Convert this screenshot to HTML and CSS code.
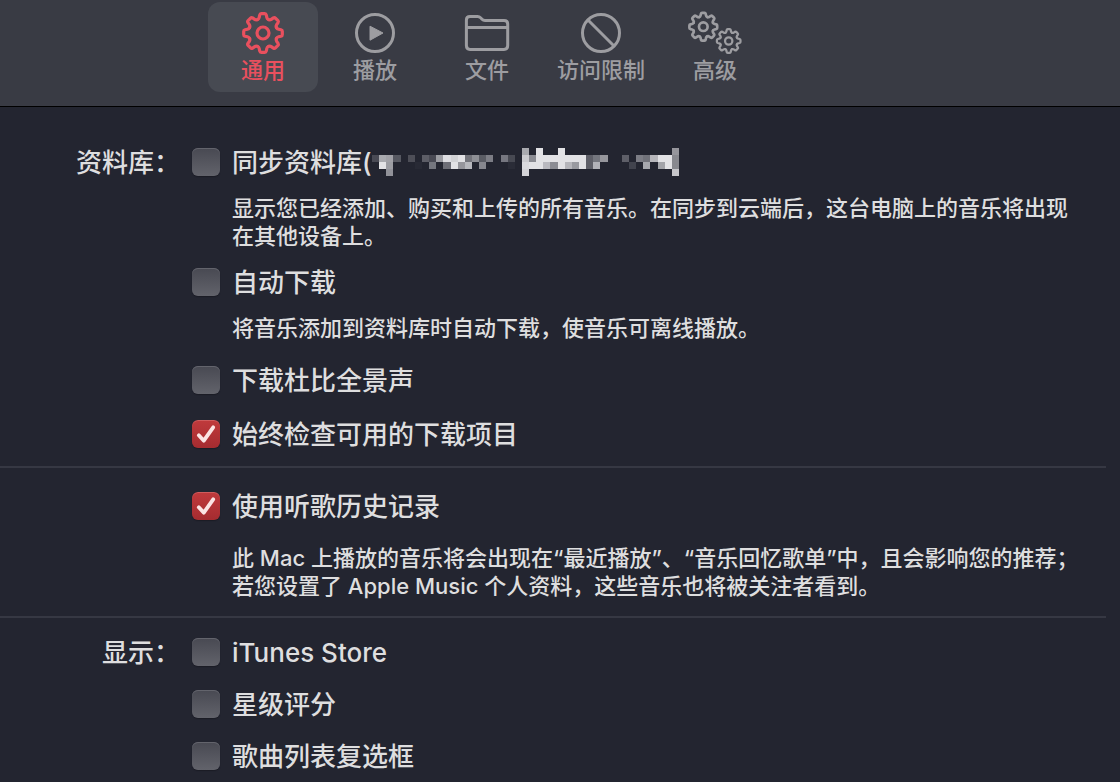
FILE: index.html
```html
<!DOCTYPE html>
<html lang="zh-CN">
<head>
    <meta charset="UTF-8">
    <meta name="viewport" content="width=device-width, initial-scale=1.0">
    <title>通用</title>
    <link rel="stylesheet" href="styles.css">
</head>
<body>
    <svg class="defs" width="0" height="0" aria-hidden="true">
        <defs>
            <path id="tooth" d="M-5.5-13.4Q-4.1-14-3.8-15.5L-3.3-18Q-3-19.3-1.8-19.3H1.8Q3-19.3 3.3-18L3.8-15.5Q4.1-14 5.5-13.4"/>
            <g id="gear" fill="none" stroke="currentColor" stroke-linecap="round">
                <use href="#tooth"/>
                <use href="#tooth" transform="rotate(45)"/>
                <use href="#tooth" transform="rotate(90)"/>
                <use href="#tooth" transform="rotate(135)"/>
                <use href="#tooth" transform="rotate(180)"/>
                <use href="#tooth" transform="rotate(225)"/>
                <use href="#tooth" transform="rotate(270)"/>
                <use href="#tooth" transform="rotate(315)"/>
                <circle r="6"/>
            </g>
        </defs>
    </svg>

    <nav class="toolbar">
        <button class="tab active" type="button">
            <svg width="44" height="44" viewBox="-22 -22 44 44" stroke-width="3.2"><use href="#gear"/></svg>
            <span>通用</span>
        </button>
        <button class="tab" type="button">
            <svg width="44" height="44" viewBox="0 0 44 44">
                <circle cx="22" cy="22" r="18.5" fill="none" stroke="currentColor" stroke-width="3"/>
                <path d="M17 15.2L30 22L17 29.2Z" fill="currentColor" stroke="currentColor" stroke-linejoin="round"/>
            </svg>
            <span>播放</span>
        </button>
        <button class="tab" type="button">
            <svg width="48" height="44" viewBox="0 0 48 44" fill="none" stroke="currentColor" stroke-width="3" stroke-linejoin="round">
                <path d="M3.4 9Q3.4 5.4 7 5.4H14.5Q16.3 5.4 17.6 6.8L19 8.2Q20.2 9.5 22 9.5H41Q44.7 9.5 44.7 13V34.5Q44.7 38.4 41 38.4H7Q3.4 38.4 3.4 34.5ZM3.4 16.6H44.7"/>
            </svg>
            <span>文件</span>
        </button>
        <button class="tab" type="button">
            <svg width="44" height="44" viewBox="0 0 44 44" fill="none" stroke="currentColor" stroke-width="3">
                <circle cx="22" cy="22" r="18.5"/>
                <path d="M9 9L35 35"/>
            </svg>
            <span>访问限制</span>
        </button>
        <button class="tab" type="button">
            <svg width="56" height="44" viewBox="0 0 56 44" stroke-width="3.7">
                <use href="#gear" transform="translate(16.3 15.7) scale(.72)"/>
                <use href="#gear" transform="translate(41.7 30) scale(.61)"/>
            </svg>
            <span>高级</span>
        </button>
    </nav>

    <main>
        <section class="group library">
            <h2>资料库：</h2>
            <div class="options">
                <div class="option">
                    <input type="checkbox" id="sync">
                    <label for="sync">同步资料库(<svg class="mosaic" width="307" height="28" viewBox="0 0 43 4" preserveAspectRatio="none" shape-rendering="crispEdges" aria-hidden="true"></svg></label>
                    <p>显示您已经添加、购买和上传的所有音乐。在同步到云端后，这台电脑上的音乐将出现<br>在其他设备上。</p>
                </div>
                <div class="option">
                    <input type="checkbox" id="auto">
                    <label for="auto">自动下载</label>
                    <p>将音乐添加到资料库时自动下载，使音乐可离线播放。</p>
                </div>
                <div class="option">
                    <input type="checkbox" id="dolby">
                    <label for="dolby">下载杜比全景声</label>
                </div>
                <div class="option">
                    <input type="checkbox" id="check" checked>
                    <label for="check">始终检查可用的下载项目</label>
                </div>
            </div>
        </section>

        <section class="group history">
            <div class="options">
                <div class="option">
                    <input type="checkbox" id="history" checked>
                    <label for="history">使用听歌历史记录</label>
                    <p>此 Mac 上播放的音乐将会出现在“最近播放”、“音乐回忆歌单”中，且会影响您的推荐；<br>若您设置了 Apple Music 个人资料，这些音乐也将被关注者看到。</p>
                </div>
            </div>
        </section>

        <section class="group">
            <h2>显示：</h2>
            <div class="options">
                <div class="option">
                    <input type="checkbox" id="store">
                    <label for="store">iTunes Store</label>
                </div>
                <div class="option">
                    <input type="checkbox" id="stars">
                    <label for="stars">星级评分</label>
                </div>
                <div class="option">
                    <input type="checkbox" id="songs">
                    <label for="songs">歌曲列表复选框</label>
                </div>
            </div>
        </section>
    </main>

    <script src="mosaic.js"></script>
</body>
</html>
```
FILE: styles.css
```css
* {
    box-sizing: border-box;
}

body {
    margin: 0;
    background-color: #232530;
    color: #dededf;
    font-family: Inter, "Noto Sans CJK SC", sans-serif;
    font-size: 26px;
    font-weight: 500;
    line-height: 30px;
}

.defs {
    position: absolute;
}

/* Toolbar */
.toolbar {
    display: flex;
    align-items: flex-start;
    gap: 2px;
    padding: 2px 0 14px 208px;
    background-color: #393b44;
    border-bottom: 1px solid #000;
}

.tab {
    display: flex;
    flex-direction: column;
    align-items: center;
    min-width: 110px;
    padding: 9px 13px 7px;
    border: none;
    border-radius: 12px;
    background: none;
    color: #9d9da1;
    font: inherit;
    font-size: 22px;
}

.tab.active {
    background-color: #474a52;
    color: #e9505e;
}

/* Setting groups */
.group {
    display: grid;
    grid-template-columns: 180px 1fr;
    column-gap: 12px;
    margin-right: 14px;
    padding: 24px 0 18px;
    border-bottom: 2px solid #363843;
}

.group:first-child {
    padding-top: 41px;
}

.group:last-child {
    padding-top: 20px;
    border-bottom: none;
}

.history {
    padding-bottom: 16px;
}

h2 {
    margin: 0;
    font-size: 26px;
    font-weight: 500;
    text-align: right;
}

.options {
    grid-column: 2;
    display: flex;
    flex-direction: column;
    gap: 24px;
}

.option {
    display: grid;
    grid-template-columns: 28px 1fr;
    column-gap: 12px;
}

.option label {
    display: flex;
    height: 28px;
    white-space: nowrap;
}

.option p {
    grid-column: 2;
    margin: 18px 0 0;
    font-size: 22px;
    line-height: 28px;
    white-space: nowrap;
}

.option:has(p) + .option:has(p) {
    margin-top: -6px;
}

.library .option:last-child {
    margin-top: 2px;
}

.history p {
    margin-top: 24px;
}

input[type="checkbox"] {
    appearance: none;
    width: 28px;
    height: 28px;
    margin: 0;
    border-radius: 6px;
    background: linear-gradient(#484952, #62636b);
    box-shadow: inset 0 1px 0 #63646c, 0 1px 1px #1b1c25;
}

input[type="checkbox"]:checked {
    background: url("data:image/svg+xml,%3Csvg xmlns='http://www.w3.org/2000/svg' viewBox='0 0 28 28'%3E%3Cpath d='M6.8 15.3L11.8 20.7L21.2 7.3' fill='none' stroke='%23fbe4e4' stroke-width='3.8' stroke-linecap='round' stroke-linejoin='round'/%3E%3C/svg%3E"), linear-gradient(#c03a3c, #a52c30);
    box-shadow: inset 0 1px 0 #cf5c5d, 0 1px 1px #1b1c25;
}
```
FILE: mosaic.js
```js
// Pixelated account name: [column, brightness %] cells for each row
var rows = [
    [[21, 70], [23, 100], [26, 100], [42, 60]],
    [[0, 20], [1, 70], [2, 66], [3, 27], [5, 22], [7, 30], [8, 20], [9, 64], [10, 98], [11, 92],
     [12, 100], [13, 42], [14, 56], [15, 29], [16, 47], [18, 44], [19, 19], [21, 88], [22, 55],
     [23, 100], [24, 100], [25, 100], [26, 100], [27, 100], [28, 100], [29, 100], [30, 31], [31, 43],
     [32, 60], [35, 31], [37, 47], [38, 41], [39, 77], [40, 100], [41, 100], [42, 53]],
    [[1, 100], [2, 64], [6, 3], [8, 43], [10, 39], [11, 100], [12, 60], [13, 78], [15, 52], [19, 4],
     [21, 96], [22, 100], [23, 100], [24, 79], [25, 55], [26, 100], [27, 77], [28, 62], [29, 100],
     [30, 31], [31, 75], [36, 16], [38, 69], [40, 67], [41, 100], [42, 53]],
    [[2, 58], [21, 93], [42, 86]]
];

var mosaic = document.querySelector('.mosaic');
rows.forEach(function(row, y) {
    row.forEach(function(cell) {
        var rect = document.createElementNS('http://www.w3.org/2000/svg', 'rect');
        rect.setAttribute('x', cell[0]);
        rect.setAttribute('y', y);
        rect.setAttribute('width', 1);
        rect.setAttribute('height', 1);
        rect.setAttribute('fill', '#e2e2e5');
        rect.setAttribute('fill-opacity', cell[1] / 100);
        mosaic.appendChild(rect);
    });
});
```
